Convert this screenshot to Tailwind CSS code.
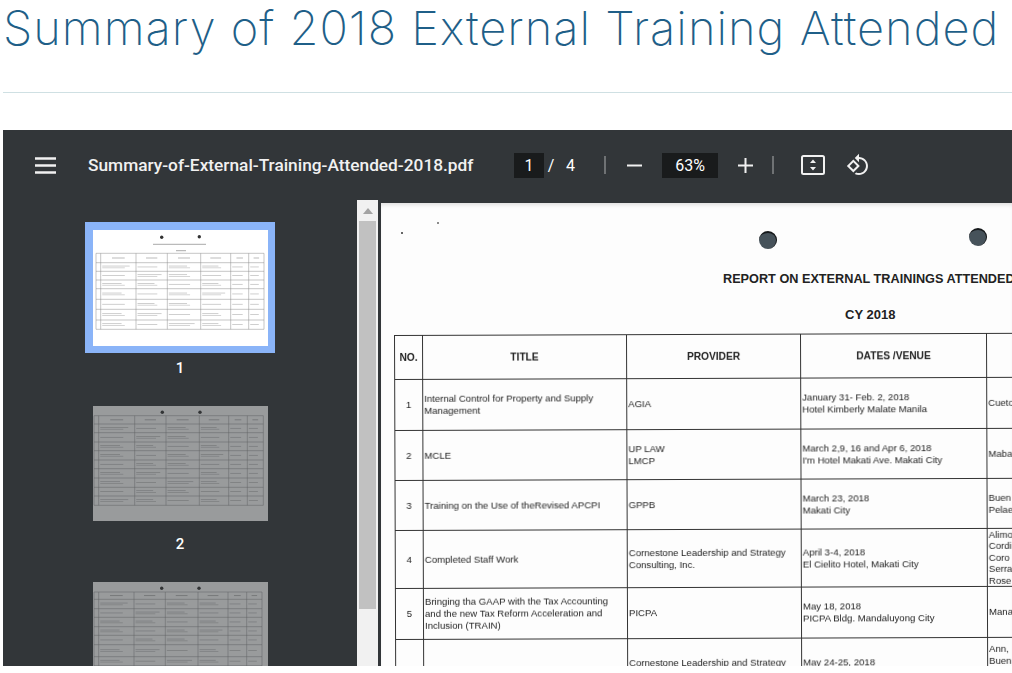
<!DOCTYPE html>
<html lang="en">
<head>
    <meta charset="UTF-8">
    <meta name="viewport" content="width=device-width, initial-scale=1.0">
    <title>Summary of 2018 External Training Attended</title>
    <script src="https://cdn.jsdelivr.net/npm/@tailwindcss/browser@4"></script>
</head>
<body class="bg-white h-[673px] overflow-hidden font-['Roboto',sans-serif]">
    <div class="pl-[3px]">
        <h1 class="h-[92px] pt-[2px] text-[47px] leading-[52px] font-extralight tracking-[1px] whitespace-nowrap text-[#1f5f88] font-['Inter',sans-serif]">Summary of 2018 External Training Attended</h1>
        <div class="h-px bg-[#cfe0e3]"></div>

        <div class="mt-[37px] h-[536px] flex flex-col bg-[#323639] overflow-hidden">
            <!-- toolbar -->
            <div class="h-[70px] shrink-0 flex items-center text-white">
                <svg class="ml-[32px] w-[21px] h-[17px]" viewBox="0 0 21 17"><path d="M0 1.5h21M0 8.5h21M0 15.5h21" stroke="#f1f1f1" stroke-width="2.4"/></svg>
                <div class="ml-[32px] pt-[2px] w-[426px] text-[17.3px] font-medium whitespace-nowrap text-[#f1f1f1]">Summary-of-External-Training-Attended-2018.pdf</div>
                <div class="w-[30px] h-[25px] bg-[#191b1c] flex items-center justify-center text-[16px] pt-px">1</div>
                <div class="ml-[1px] w-[12px] text-center text-[16px] pt-px">/</div>
                <div class="ml-[9px] w-[14px] text-[16px] pt-px">4</div>
                <div class="ml-[24px] w-[2px] h-[18px] bg-[#6f7274]"></div>
                <svg class="ml-[21px] w-[15px] h-[15px]" viewBox="0 0 15 15"><path d="M0 7.5h15" stroke="#f1f1f1" stroke-width="2"/></svg>
                <div class="ml-[20px] w-[56px] h-[25px] bg-[#191b1c] flex items-center justify-center text-[16px] pt-px">63%</div>
                <svg class="ml-[20px] w-[15px] h-[15px]" viewBox="0 0 15 15"><path d="M0 7.5h15M7.5 0v15" stroke="#f1f1f1" stroke-width="2"/></svg>
                <div class="ml-[19px] w-[2px] h-[18px] bg-[#6f7274]"></div>
                <svg class="ml-[27px] w-[24px] h-[20px]" viewBox="0 0 24 20"><rect x="1" y="1" width="22" height="18" rx="1.5" fill="none" stroke="#f1f1f1" stroke-width="2"/><path d="M12 4.5l3 3.5H9zM12 15.5l-3-3.5h6z" fill="#f1f1f1"/></svg>
                <svg class="ml-[21px] w-[24px] h-[24px]" viewBox="0 0 24 24"><path fill="#f1f1f1" d="M7.34 6.41L.86 12.9l6.49 6.48 6.49-6.48-6.5-6.49zM3.69 12.9l3.66-3.66L11 12.9l-3.66 3.66-3.65-3.66zm15.67-6.26C17.61 4.88 15.3 4 13 4V.76L8.76 5 13 9.24V6c1.79 0 3.58.68 4.95 2.05 2.73 2.73 2.73 7.17 0 9.9C16.58 19.32 14.79 20 13 20c-.97 0-1.94-.21-2.84-.61l-1.49 1.49C10.02 21.62 11.51 22 13 22c2.3 0 4.61-.88 6.36-2.64 3.52-3.51 3.52-9.21 0-12.72z"/></svg>
            </div>

            <div class="flex-1 flex min-h-0">
                <!-- thumbnails -->
                <div class="w-[354px] shrink-0 overflow-hidden flex flex-col items-center">
                    <div class="mt-[22px] w-[190px] h-[131px] shrink-0 bg-[#8ab4f8] flex items-center justify-center">
                        <svg id="thumb1" class="w-[175px] h-[116px] bg-white" viewBox="0 0 175 116"></svg>
                    </div>
                    <div class="mt-[5px] h-[20px] shrink-0 text-white font-medium text-[15px] leading-[20px]">1</div>
                    <div class="mt-[28px] w-[175px] h-[115px] shrink-0 bg-white opacity-50">
                        <svg id="thumb2" class="w-[175px] h-[115px]" viewBox="0 0 175 115"></svg>
                    </div>
                    <div class="mt-[13px] h-[20px] shrink-0 text-white font-medium text-[15px] leading-[20px]">2</div>
                    <div class="mt-[28px] w-[175px] h-[115px] shrink-0 bg-white opacity-50">
                        <svg id="thumb3" class="w-[175px] h-[115px]" viewBox="0 0 175 115"></svg>
                    </div>
                </div>

                <!-- scrollbar -->
                <div class="w-[21px] shrink-0 bg-[#f1f1f1] flex flex-col items-center">
                    <div class="h-[21px] shrink-0 flex items-center justify-center">
                        <svg class="w-[10px] h-[6px]" viewBox="0 0 10 6"><path d="M5 0l5 6H0z" fill="#a3a3a3"/></svg>
                    </div>
                    <div class="w-[17px] h-[388px] bg-[#c1c1c1]"></div>
                </div>

                <!-- page -->
                <div class="relative ml-[3px] mt-[3px] flex-1 min-w-0 bg-[#fdfdfd] overflow-hidden text-[#222] shadow-[inset_0_4px_4px_-2px_rgba(0,0,0,0.12)] font-['Liberation_Sans',sans-serif]">
                    <span class="absolute left-[20px] top-[29px] w-[2px] h-[2px] rounded-full bg-[#333]"></span>
                    <span class="absolute left-[56px] top-[19px] w-[2px] h-[2px] rounded-full bg-[#666]"></span>
                    <span class="absolute left-[378px] top-[28px] w-[18px] h-[18px] rounded-full bg-[#46525a] border-t-2 border-r border-[#16191b]"></span>
                    <span class="absolute left-[588px] top-[25px] w-[18px] h-[18px] rounded-full bg-[#46525a] border-t-2 border-r border-[#16191b]"></span>

                    <div class="pt-[69px] pl-[342px] w-[700px] text-[12.7px] leading-[14px] font-bold whitespace-nowrap">REPORT ON EXTERNAL TRAININGS ATTENDED</div>
                    <div class="mt-[22px] pl-[464px] text-[13px] leading-[14px] font-bold whitespace-nowrap">CY 2018</div>

                    <table class="mt-[13px] ml-[13px] w-[800px] table-fixed border-collapse rotate-[-0.2deg] origin-top-left text-[9.6px] leading-[12px] blur-[0.2px]">
                        <colgroup>
                            <col class="w-[28px]">
                            <col class="w-[204px]">
                            <col class="w-[174px]">
                            <col class="w-[186px]">
                            <col class="w-[208px]">
                        </colgroup>
                        <thead>
                            <tr class="h-[44px] font-bold text-center text-[10.2px]">
                                <th class="border border-[#333]">NO.</th>
                                <th class="border border-[#333]">TITLE</th>
                                <th class="border border-[#333]">PROVIDER</th>
                                <th class="border border-[#333]">DATES /VENUE</th>
                                <th class="border border-[#333]"></th>
                            </tr>
                        </thead>
                        <tbody>
                            <tr class="h-[51px]">
                                <td class="border border-[#333] text-center">1</td>
                                <td class="border border-[#333] px-[1px]">Internal Control for Property and Supply Management</td>
                                <td class="border border-[#333] px-[1px]">AGIA</td>
                                <td class="border border-[#333] px-[1px]">January 31- Feb. 2, 2018<br>Hotel Kimberly Malate Manila</td>
                                <td class="border border-[#333] px-[1px]">Cueto</td>
                            </tr>
                            <tr class="h-[50px]">
                                <td class="border border-[#333] text-center">2</td>
                                <td class="border border-[#333] px-[1px]">MCLE</td>
                                <td class="border border-[#333] px-[1px]">UP LAW<br>LMCP</td>
                                <td class="border border-[#333] px-[1px]">March 2,9, 16 and Apr 6, 2018<br>I'm Hotel Makati Ave. Makati City</td>
                                <td class="border border-[#333] px-[1px]">Maba</td>
                            </tr>
                            <tr class="h-[50px]">
                                <td class="border border-[#333] text-center">3</td>
                                <td class="border border-[#333] px-[1px]">Training on the Use of theRevised APCPI</td>
                                <td class="border border-[#333] px-[1px]">GPPB</td>
                                <td class="border border-[#333] px-[1px]">March 23, 2018<br>Makati City</td>
                                <td class="border border-[#333] px-[1px]">Buen<br>Pelae</td>
                            </tr>
                            <tr class="h-[58px]">
                                <td class="border border-[#333] text-center">4</td>
                                <td class="border border-[#333] px-[1px]">Completed Staff Work</td>
                                <td class="border border-[#333] px-[1px]">Cornestone Leadership and Strategy Consulting, Inc.</td>
                                <td class="border border-[#333] px-[1px]">April 3-4, 2018<br>El Cielito Hotel, Makati City</td>
                                <td class="border border-[#333] px-[1px] leading-[11.4px]">Alimo<br>Cordi<br>Coro<br>Serra<br>Rose</td>
                            </tr>
                            <tr class="h-[51px]">
                                <td class="border border-[#333] text-center">5</td>
                                <td class="border border-[#333] px-[1px]">Bringing tha GAAP with the Tax Accounting<br>and the new Tax Reform Acceleration and<br>Inclusion (TRAIN)</td>
                                <td class="border border-[#333] px-[1px]">PICPA</td>
                                <td class="border border-[#333] px-[1px]">May 18, 2018<br>PICPA Bldg. Mandaluyong City</td>
                                <td class="border border-[#333] px-[1px]">Mana</td>
                            </tr>
                            <tr class="h-[60px]">
                                <td class="border border-[#333]"></td>
                                <td class="border border-[#333]"></td>
                                <td class="border border-[#333] px-[1px] align-top pt-[18px]">Cornestone Leadership and Strategy</td>
                                <td class="border border-[#333] px-[1px] align-top pt-[18px]">May 24-25, 2018</td>
                                <td class="border border-[#333] px-[1px] align-top pt-[5px]">Ann,<br>Buen</td>
                            </tr>
                        </tbody>
                    </table>
                </div>
            </div>
        </div>
    </div>

    <script>
        // tiny page previews: grid lines, punch holes and grey bars for the text
        function drawThumb(id, cols, rows, holes, heading) {
            let svg = "";
            holes.forEach(h => {
                svg += `<circle cx="${h[0]}" cy="${h[1]}" r="1.7" fill="#333"/>`;
            });
            if (heading) {
                svg += `<rect x="60" y="13.8" width="53" height="1" fill="#aaa"/><rect x="83" y="20.2" width="10" height="1" fill="#aaa"/>`;
            }
            let left = cols[0], right = cols[cols.length - 1];
            let top = rows[0], bottom = rows[rows.length - 1];
            let bars = "";
            rows.forEach(y => {
                bars += `<path d="M${left} ${y}H${right}" stroke="#8a8a8a" stroke-width=".5"/>`;
            });
            cols.forEach(x => {
                bars += `<path d="M${x} ${top}V${bottom}" stroke="#8a8a8a" stroke-width=".5"/>`;
            });
            for (let r = 0; r < rows.length - 1; r++) {
                let mid = (rows[r] + rows[r + 1]) / 2;
                for (let c = 1; c < cols.length - 1; c++) {
                    let w = cols[c + 1] - cols[c];
                    let long = (r * 3 + c * 5) % 4 == 0 ? .85 : .6;
                    let x = cols[c] + 1.5;
                    if (r == 0) {
                        bars += `<rect x="${cols[c] + w * .32}" y="${mid - .4}" width="${w * .36}" height=".8" fill="#aaa"/>`;
                    } else if (c < 5 && (r + c) % 3 != 0) {
                        bars += `<rect x="${x}" y="${mid - 1.3}" width="${(w - 3) * long}" height=".7" fill="#bbb"/>`;
                        bars += `<rect x="${x}" y="${mid + .5}" width="${(w - 3) * .7}" height=".7" fill="#c4c4c4"/>`;
                    } else {
                        bars += `<rect x="${x}" y="${mid - .4}" width="${(w - 3) * .7}" height=".7" fill="#bbb"/>`;
                    }
                }
            }
            document.getElementById(id).innerHTML = svg + bars;
        }
        drawThumb("thumb1",
            [3, 7.7, 43, 74.3, 107.7, 137.7, 155.7, 171],
            [23.3, 32.7, 41.3, 50, 58.7, 69.3, 79.3, 90, 99.3],
            [[68.7, 7.3], [106.3, 6.7]], true);
        drawThumb("thumb2",
            [1, 5.7, 41.7, 73, 106.3, 135.7, 154.3, 170.3],
            [9.7, 18, 26.7, 36, 44.7, 54, 62.7, 72, 81.3, 90, 99.3],
            [[69.3, 6.3], [107, 6.3]], false);
        drawThumb("thumb3",
            [1, 5.7, 41, 72.3, 105, 135, 153.7, 169],
            [10, 17.3, 26.7, 35.3, 44.7, 53.3, 62.7, 74.7, 83.7, 93, 102],
            [[68.7, 6.3], [106, 6.3]], false);
    </script>
</body>
</html>
